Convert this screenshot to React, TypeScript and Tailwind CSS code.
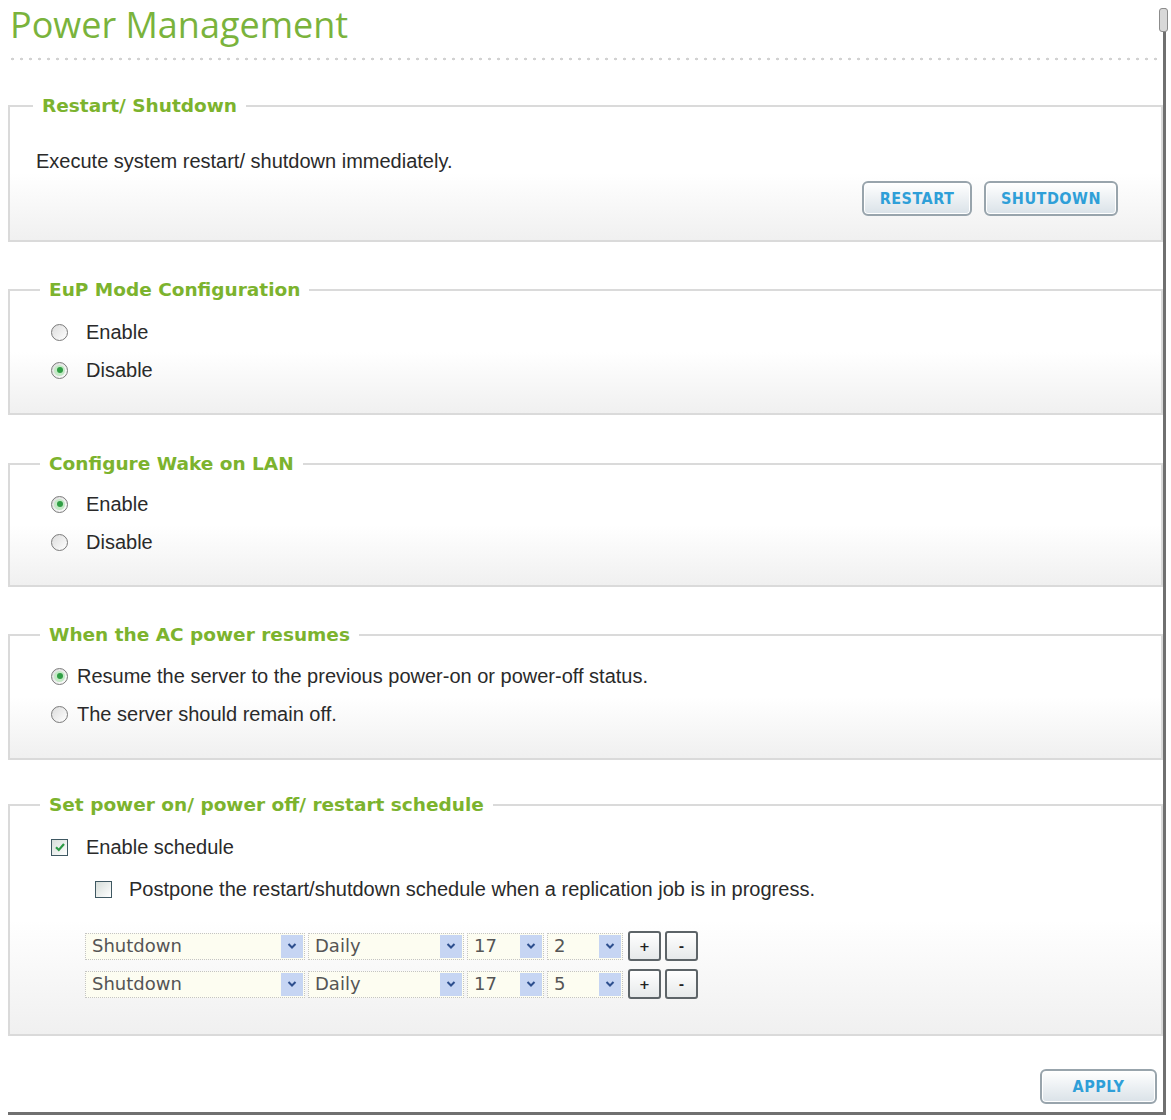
import React from "react";

type Option = { label: string; checked?: boolean };

// Radio dot, drawn like the old XP-style control
const Radio = ({ checked }: { checked?: boolean }) => (
  <span className="flex h-[17px] w-[17px] shrink-0 items-center justify-center rounded-full border-[1.5px] border-[#7a7a7a] bg-linear-to-br from-[#dcdcdc] to-white">
    {checked && (
      <span className="flex h-[11px] w-[11px] items-center justify-center rounded-full bg-[#c4e9c6]">
        <span className="h-[6px] w-[6px] rounded-full bg-[#2f9e44]" />
      </span>
    )}
  </span>
);

const Checkbox = ({ checked }: { checked?: boolean }) => (
  <span className="flex h-[17px] w-[17px] shrink-0 items-center justify-center border-[1.5px] border-[#3f5862] bg-linear-to-br from-[#d6ddd9] to-white">
    {checked && (
      <svg viewBox="0 0 12 12" className="h-[12px] w-[12px]">
        <path d="M2 6.2 L4.8 9 L10 3" fill="none" stroke="#2c9a45" strokeWidth="2.2" />
      </svg>
    )}
  </span>
);

const Chevron = () => (
  <svg viewBox="0 0 10 8" className="h-[8px] w-[10px]">
    <path d="M1.5 2 L5 5.5 L8.5 2" fill="none" stroke="#2d4f8e" strokeWidth="2" />
  </svg>
);

const Select = ({ value, className }: { value: string; className: string }) => (
  <div
    className={`flex h-[27px] items-center border border-dotted border-[#c4c4c4] bg-[#fdfdf1] ${className}`}
  >
    <span className="flex-1 pl-[6px] font-['DejaVu_Sans',sans-serif] text-[18px] leading-none text-[#555]">
      {value}
    </span>
    <span className="mr-[1px] flex h-[23px] w-[22px] items-center justify-center bg-[#c6d5f3]">
      <Chevron />
    </span>
  </div>
);

const SmallButton = ({ label }: { label: string }) => (
  <button className="flex h-[30px] w-[33px] items-center justify-center rounded-[3px] border-2 border-[#5d6468] bg-linear-to-b from-white to-[#e6e9ea] font-['DejaVu_Sans',sans-serif] text-[13px] font-bold leading-none text-[#222]">
    {label}
  </button>
);

const ActionButton = ({ label, className }: { label: string; className: string }) => (
  <button
    className={`h-[35px] rounded-[6px] border-2 border-[#98a4ac] bg-linear-to-b from-white to-[#dae2e8] font-['DejaVu_Sans_Condensed','DejaVu_Sans',sans-serif] text-[16px] font-bold tracking-[0.5px] text-[#2f9fd8] shadow-[inset_0_0_0_1px_#ffffff] ${className}`}
  >
    {label}
  </button>
);

const Section = ({
  title,
  legendClass = "ml-[30px]",
  className,
  children,
}: {
  title: string;
  legendClass?: string;
  className: string;
  children: React.ReactNode;
}) => (
  <fieldset
    className={`border-2 border-[#dadada] bg-linear-to-b from-white via-white to-[#f0f0f0] ${className}`}
  >
    <legend
      className={`px-[9px] font-['DejaVu_Sans',Verdana,sans-serif] text-[18.5px] font-bold leading-[22px] text-[#7cb32e] ${legendClass}`}
    >
      {title}
    </legend>
    {children}
  </fieldset>
);

const RadioGroup = ({ options, gap }: { options: Option[]; gap: string }) => (
  <div className="flex flex-col pl-[41px]">
    {options.map((o) => (
      <label key={o.label} className={`flex h-[38px] items-center ${gap}`}>
        <Radio checked={o.checked} />
        <span className="text-[20px] leading-none text-[#2a2a2a]">{o.label}</span>
      </label>
    ))}
  </div>
);

const ScheduleRow = ({ minute }: { minute: string }) => (
  <div className="flex items-center gap-[3px]">
    <Select value="Shutdown" className="w-[220px]" />
    <Select value="Daily" className="w-[156px]" />
    <Select value="17" className="w-[77px]" />
    <Select value={minute} className="w-[76px]" />
    <div className="ml-[2px] flex gap-[4px]">
      <SmallButton label="+" />
      <SmallButton label="-" />
    </div>
  </div>
);

export default function App() {
  return (
    <div className="min-h-[1120px] bg-white font-['Liberation_Sans',Arial,sans-serif]">
      <div className="relative ml-[8px] mt-[8px] w-[1158px] border-b-[3px] border-r-[3px] border-[#707070]">
        {/* scrollbar thumb */}
        <span className="absolute right-[-5px] top-0 h-[24px] w-[9px] rounded-[3px] border border-[#8c8c8c] bg-[#d8d8d8]" />

        {/* Title */}
        <div className="h-[49px] pl-[2px] font-['Open_Sans',sans-serif] text-[36px] leading-[34px] text-[#7ab33c]">
          Power Management
        </div>
        <div className="mr-[4px] h-[4px] bg-[radial-gradient(circle,#d2d2d2_1.2px,transparent_1.6px)] bg-[length:9px_4px] bg-repeat-x" />

        <div className="flex flex-col">
          <Section title="Restart/ Shutdown" legendClass="ml-[23px]" className="mt-[34px] pb-[24px]">
            <div className="pl-[26px] pt-[32px] text-[20px] leading-[24px] text-[#2a2a2a]">
              Execute system restart/ shutdown immediately.
            </div>
            <div className="mt-[8px] flex justify-end gap-[12px] pr-[43px]">
              <ActionButton label="RESTART" className="w-[110px]" />
              <ActionButton label="SHUTDOWN" className="w-[134px]" />
            </div>
          </Section>

          <Section title="EuP Mode Configuration" className="mt-[37px] pb-[24px] pt-[12px]">
            <RadioGroup
              gap="gap-[18px]"
              options={[{ label: "Enable" }, { label: "Disable", checked: true }]}
            />
          </Section>

          <Section title="Configure Wake on LAN" className="mt-[38px] pb-[24px] pt-[10px]">
            <RadioGroup
              gap="gap-[18px]"
              options={[{ label: "Enable", checked: true }, { label: "Disable" }]}
            />
          </Section>

          <Section title="When the AC power resumes" className="mt-[37px] pb-[25px] pt-[11px]">
            <RadioGroup
              gap="gap-[9px]"
              options={[
                { label: "Resume the server to the previous power-on or power-off status.", checked: true },
                { label: "The server should remain off." },
              ]}
            />
          </Section>

          <Section title="Set power on/ power off/ restart schedule" className="mt-[34px] pb-[35px] pt-[12px]">
            <label className="flex h-[38px] items-center gap-[18px] pl-[41px]">
              <Checkbox checked />
              <span className="text-[20px] leading-none text-[#2a2a2a]">Enable schedule</span>
            </label>
            <label className="mt-[4px] flex h-[38px] items-center gap-[17px] pl-[85px]">
              <Checkbox />
              <span className="text-[20px] leading-none text-[#2a2a2a]">
                Postpone the restart/shutdown schedule when a replication job is in progress.
              </span>
            </label>
            <div className="mt-[23px] flex flex-col gap-[8px] pl-[75px]">
              <ScheduleRow minute="2" />
              <ScheduleRow minute="5" />
            </div>
          </Section>
        </div>

        <div className="flex justify-end pb-[8px] pr-[6px] pt-[33px]">
          <ActionButton label="APPLY" className="w-[117px]" />
        </div>
      </div>
    </div>
  );
}
